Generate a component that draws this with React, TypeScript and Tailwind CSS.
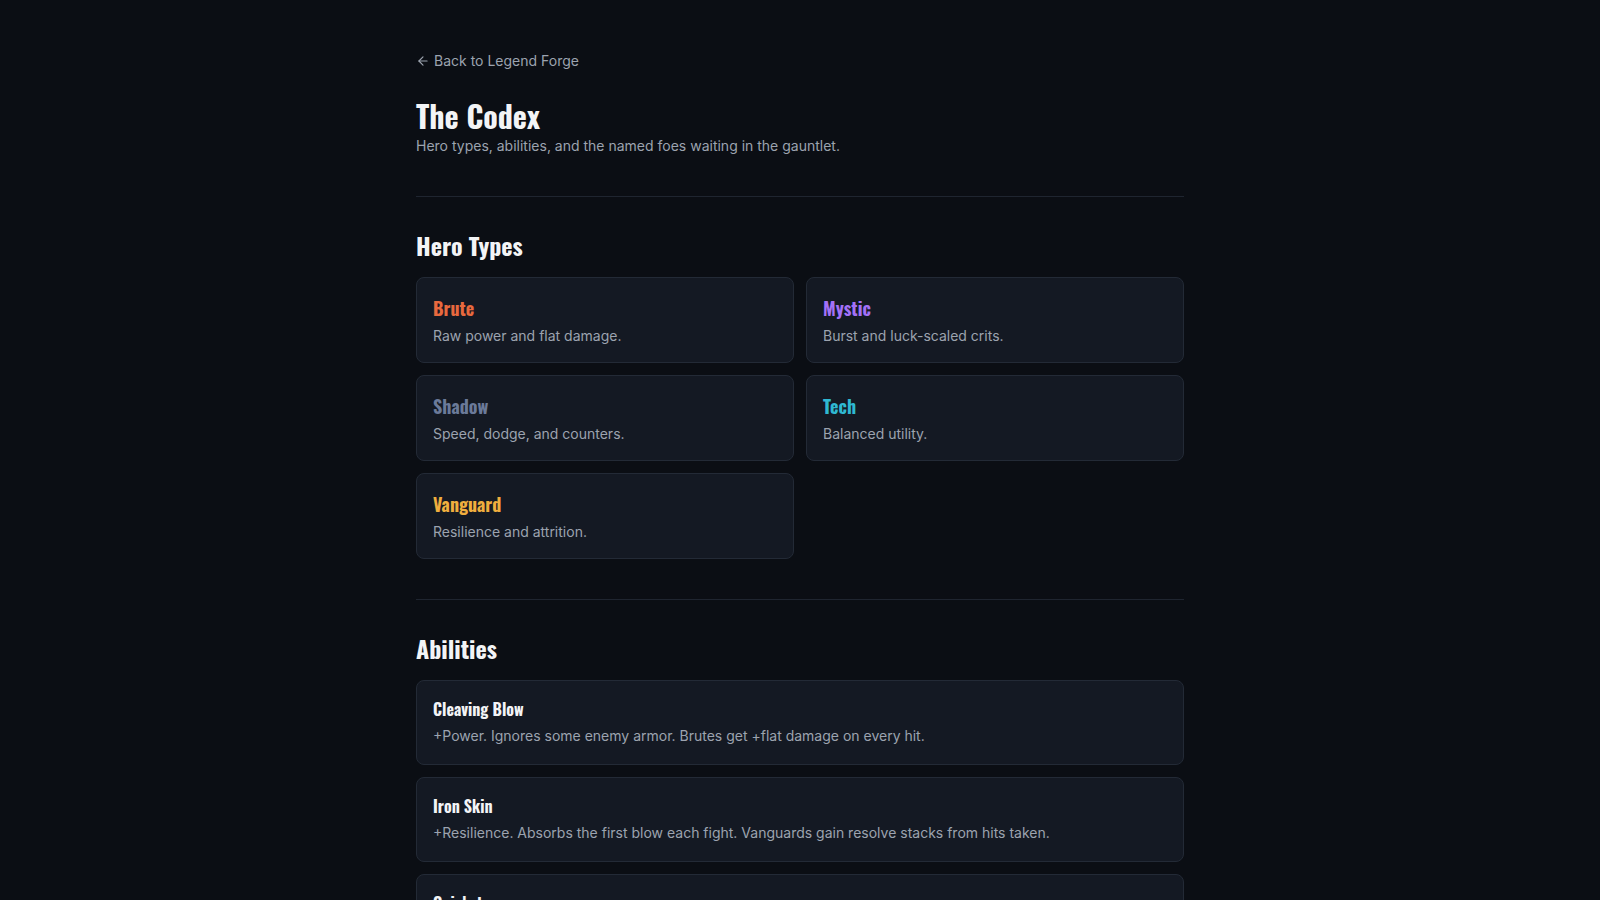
import { ArrowLeft } from 'lucide-react';

const display = { fontFamily: '"Oswald", "Liberation Sans Narrow", "DejaVu Sans Condensed", "Roboto Condensed", "Liberation Sans", sans-serif' };

const heroTypes = [
  { name: 'Brute', color: 'text-[#e8693e]', blurb: 'Raw power and flat damage.' },
  { name: 'Mystic', color: 'text-[#a371f7]', blurb: 'Burst and luck-scaled crits.' },
  { name: 'Shadow', color: 'text-[#6b7a99]', blurb: 'Speed, dodge, and counters.' },
  { name: 'Tech', color: 'text-[#2fb8d2]', blurb: 'Balanced utility.' },
  { name: 'Vanguard', color: 'text-[#f0ae3e]', blurb: 'Resilience and attrition.' },
];

const abilities = [
  { name: 'Cleaving Blow', blurb: '+Power. Ignores some enemy armor. Brutes get +flat damage on every hit.' },
  { name: 'Iron Skin', blurb: '+Resilience. Absorbs the first blow each fight. Vanguards gain resolve stacks from hits taken.' },
  { name: 'Quickstep', blurb: '+Speed. Chance to dodge incoming attacks. Shadows counter after a successful dodge.' },
  { name: 'Arcane Surge', blurb: '+Luck. Crits hit harder. Mystics build surge on every crit.' },
];

const Section = ({ title, children }: { title: string; children: React.ReactNode }) => (
  <section className="mt-10 border-t border-[#1f2530] pt-8">
    <h2 className="mb-4 text-2xl font-bold text-[#f3f4f6]" style={display}>{title}</h2>
    {children}
  </section>
);

const App = () => {
  return (
    <div className="min-h-screen bg-[#0b0e14] text-[#e5e7eb]" style={{ fontFamily: 'Inter, "Liberation Sans", sans-serif' }}>
      <main className="mx-auto max-w-3xl pt-[51px] pb-16">
        <a href="#" className="flex items-center gap-1 text-sm text-[#9ca3af] hover:text-white">
          <ArrowLeft className="h-3.5 w-3.5" strokeWidth={2} />
          Back to Legend Forge
        </a>

        <h1 className="mt-[27px] text-3xl font-bold text-[#f3f4f6]" style={display}>The Codex</h1>
        <p className="mt-0.5 text-sm text-[#9ca3af]">Hero types, abilities, and the named foes waiting in the gauntlet.</p>

        <Section title="Hero Types">
          <div className="grid grid-cols-2 gap-3">
            {heroTypes.map((h) => (
              <div key={h.name} className="rounded-lg border border-[#232a36] bg-[#141923] p-4">
                <h3 className={`text-lg font-bold ${h.color}`} style={display}>{h.name}</h3>
                <p className="mt-1 text-sm text-[#9ca3af]">{h.blurb}</p>
              </div>
            ))}
          </div>
        </Section>

        <Section title="Abilities">
          <div className="flex flex-col gap-3">
            {abilities.map((a) => (
              <div key={a.name} className="rounded-lg border border-[#232a36] bg-[#141923] p-4">
                <h3 className="text-base leading-6 font-bold text-[#f3f4f6]" style={display}>{a.name}</h3>
                <p className="mt-1 text-sm leading-relaxed text-[#9ca3af]">{a.blurb}</p>
              </div>
            ))}
          </div>
        </Section>
      </main>
    </div>
  );
};

export default App;
